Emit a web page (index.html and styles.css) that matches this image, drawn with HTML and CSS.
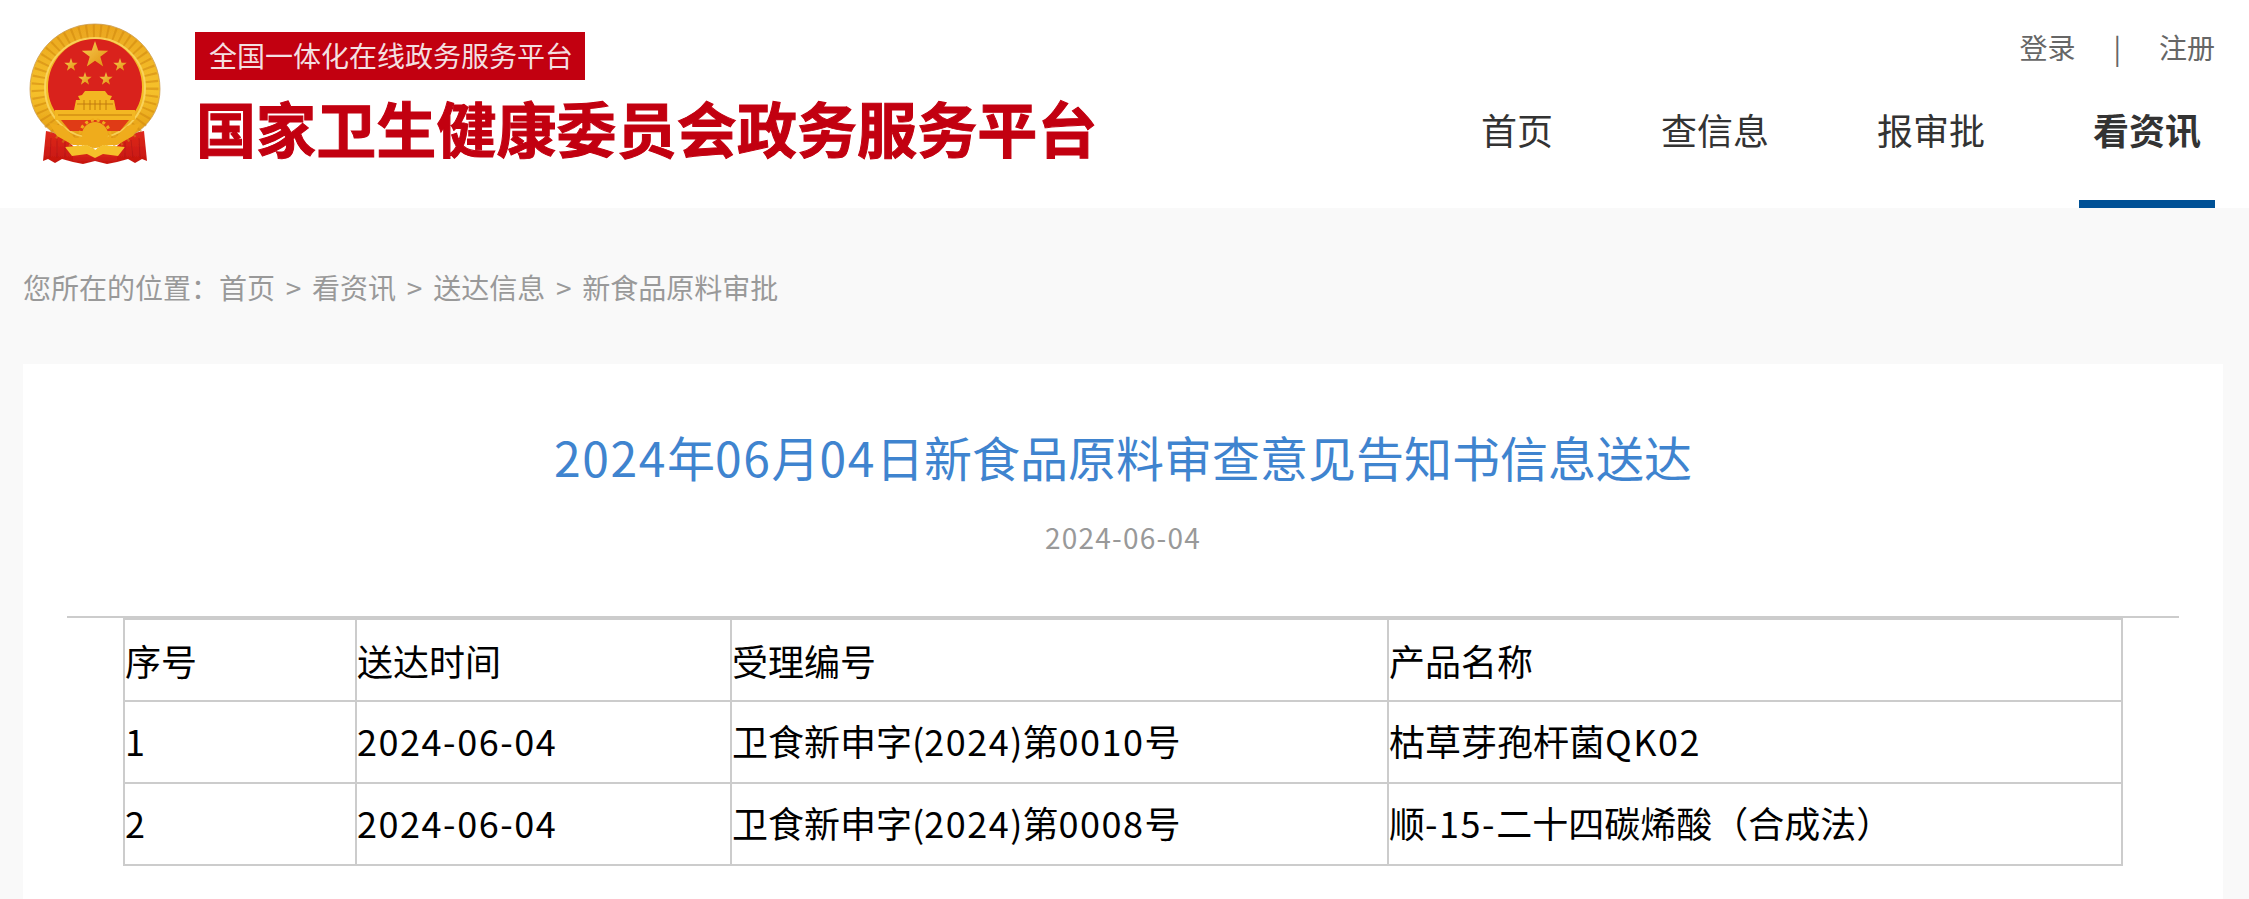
FILE: index.html
```html
<!DOCTYPE html>
<html lang="zh-CN">
<head>
<meta charset="utf-8">
<title>2024年06月04日新食品原料审查意见告知书信息送达</title>
<link rel="stylesheet" href="styles.css">
</head>
<body>
<header class="site-header">
  <div class="brand">
    <svg class="emblem" viewBox="14 13 132 141" aria-hidden="true">
      <defs>
        <linearGradient id="gold" x1="0" y1="0" x2="0" y2="1">
          <stop offset="0" stop-color="#eaa51e"/>
          <stop offset="0.55" stop-color="#f6c22c"/>
          <stop offset="1" stop-color="#e39a12"/>
        </linearGradient>
        <linearGradient id="star" x1="0" y1="0" x2="1" y2="1">
          <stop offset="0" stop-color="#f8cf52"/>
          <stop offset="1" stop-color="#e0900f"/>
        </linearGradient>
        <linearGradient id="drape" x1="0" y1="0" x2="0" y2="1">
          <stop offset="0" stop-color="#e02a1c"/>
          <stop offset="1" stop-color="#c5150f"/>
        </linearGradient>
        <filter id="soft" x="-5%" y="-5%" width="110%" height="110%"><feGaussianBlur stdDeviation="0.5"/></filter>
      </defs>
      <g filter="url(#soft)">
        <path fill="url(#drape)" d="M31 121 L46 124 L60 138 L58 152 L47 149 L40 153 L33 149 L28 151Z"/>
        <path fill="url(#drape)" d="M129 121 L114 124 L100 138 L102 152 L113 149 L120 153 L127 149 L132 151Z"/>
        <path fill="url(#drape)" d="M58 140 H102 V152 L92 154 L80 151 L68 154 L58 152Z"/>
        <path fill="url(#gold)" stroke="#c99a52" stroke-width="0.8" d="M80 14 C116 14 145 43 145 79 C145 96 138 110 124 121 L104 133 H56 L36 121 C22 110 15 96 15 79 C15 43 44 14 80 14Z"/>
        <circle cx="80" cy="78" r="57" fill="none" stroke="#cf8610" stroke-width="13" stroke-dasharray="2 5" opacity="0.55"/>
        <circle cx="80" cy="78" r="50" fill="none" stroke="#fbd968" stroke-width="2" opacity="0.8"/>
        <path fill="#d9201a" d="M80 29 C106 29 127 50 127 77 C127 90 122 101 113 110 H47 C38 101 33 90 33 77 C33 50 54 29 80 29Z"/>
        <g fill="url(#star)">
          <polygon points="80,31 83.3,40.5 93.3,40.7 85.3,46.8 88.2,56.4 80,50.7 71.8,56.4 74.7,46.8 66.7,40.7 76.7,40.5"/>
          <polygon points="56,48 57.6,52.7 62.7,52.8 58.7,55.9 60.1,60.7 56,57.8 51.9,60.7 53.3,55.9 49.3,52.8 54.4,52.7"/>
          <polygon points="105,48 106.6,52.7 111.7,52.8 107.7,55.9 109.1,60.7 105,57.8 100.9,60.7 102.3,55.9 98.3,52.8 103.4,52.7"/>
          <polygon points="70,62 71.6,66.7 76.7,66.8 72.7,69.9 74.1,74.7 70,71.8 65.9,74.7 67.3,69.9 63.3,66.8 68.4,66.7"/>
          <polygon points="91,62 92.6,66.7 97.7,66.8 93.7,69.9 95.1,74.7 91,71.8 86.9,74.7 88.3,69.9 84.3,66.8 89.4,66.7"/>
        </g>
        <g fill="#f3b722">
          <path d="M63 86 L67 85 L70 81 H90 L93 85 L97 86 L95 90 H99 L101 100 H59 L61 90 H65Z"/>
          <rect x="40" y="100" width="80" height="10"/>
        </g>
        <path fill="#e03a18" d="M46 110 H114 L105 121 H55Z"/>
        <g fill="none" stroke="#b8700c" stroke-width="0.8">
          <path d="M62 94 H98 M43 105 H117"/>
          <path d="M69 90 V100 M75 90 V100 M80 90 V100 M85 90 V100 M91 90 V100"/>
        </g>
        <circle cx="80" cy="125" r="13" fill="#efac1c"/>
        <circle cx="80" cy="125" r="15" fill="none" stroke="#efac1c" stroke-width="3" stroke-dasharray="3 3"/>
        <path fill="#efac1c" d="M34 113 L48 116 L60 128 L100 128 L112 116 L126 113 L118 126 L102 135 H58 L42 126Z"/>
        <path fill="#f5c02a" d="M50 137 L72 135 L80 140 L88 135 L110 137 L103 146 L88 144 L80 148 L72 144 L57 146Z"/>
        <g stroke="#a81612" stroke-width="0.8" fill="none" opacity="0.7">
          <path d="M36 128 L35 148 M42 129 L42 148 M50 132 L50 148 M110 132 L110 148 M116 130 L118 148 M124 128 L125 148"/>
        </g>
      </g>
    </svg>
    <div class="brand-text">
      <div class="brand-tag">全国一体化在线政务服务平台</div>
      <div class="brand-name">国家卫生健康委员会政务服务平台</div>
    </div>
  </div>
  <div class="header-right">
    <div class="user-links">
      <a class="user-link">登录</a>
      <span class="user-sep">|</span>
      <a class="user-link">注册</a>
    </div>
    <nav class="main-nav">
      <a class="nav-item">首页</a>
      <a class="nav-item">查信息</a>
      <a class="nav-item">报审批</a>
      <a class="nav-item is-active">看资讯</a>
    </nav>
  </div>
</header>

<div class="breadcrumb">您所在的位置&#xFF1A;首页 &gt; 看资讯 &gt; 送达信息 &gt; 新食品原料审批</div>

<main class="article">
  <h1 class="article-title"><span class="num">2024</span>年<span class="num">06</span>月<span class="num">04</span>日新食品原料审查意见告知书信息送达</h1>
  <div class="article-date">2024-06-04</div>
  <div class="article-body">
    <table class="data-table">
      <colgroup>
        <col class="col-a"><col class="col-b"><col class="col-c"><col class="col-d">
      </colgroup>
      <tr class="head-row"><td>序号</td><td>送达时间</td><td>受理编号</td><td>产品名称</td></tr>
      <tr><td>1</td><td class="num">2024-06-04</td><td>卫食新申字(<span class="num">2024</span>)第<span class="num">0010</span>号</td><td>枯草芽孢杆菌<span class="num">QK02</span></td></tr>
      <tr><td>2</td><td class="num">2024-06-04</td><td>卫食新申字(<span class="num">2024</span>)第<span class="num">0008</span>号</td><td>顺<span class="num">-15-</span>二十四碳烯酸&#xFF08;合成法&#xFF09;</td></tr>
    </table>
  </div>
</main>
</body>
</html>
```
FILE: styles.css
```css
* { box-sizing: border-box; }
html, body { margin: 0; padding: 0; }
body {
  height: 899px;
  overflow: hidden;
  background: #f9f9f9;
  font-family: "Noto Sans CJK SC", "Noto Sans", sans-serif;
  color: #000;
}
.num { letter-spacing: 0.043em; }
.site-header {
  height: 208px;
  background: #fff;
  display: flex;
  justify-content: space-between;
  padding: 0 34px 0 29px;
}
.brand { display: flex; align-items: flex-start; gap: 34px; }
.emblem { width: 132px; height: 141px; margin-top: 23px; flex: none; }
.brand-text { padding-top: 32px; }
.brand-tag {
  width: 390px;
  height: 48px;
  background: #c20010;
  color: #f4dfe0;
  font-size: 28px;
  line-height: 47px;
  padding-left: 14px;
  white-space: nowrap;
}
.brand-name {
  margin-top: 12px;
  margin-left: 1px;
  color: #c20010;
  font-size: 60px;
  font-weight: 700;
  letter-spacing: 0.1px;
  line-height: 70px;
  white-space: nowrap;
  -webkit-text-stroke: 1px #c20010;
}
.header-right {
  display: flex;
  flex-direction: column;
  justify-content: space-between;
  align-items: flex-end;
}
.user-links {
  display: flex;
  align-items: center;
  gap: 38px;
  height: 38px;
  margin-top: 28px;
  font-size: 28px;
  line-height: 38px;
  color: #666;
}
.main-nav { display: flex; gap: 80px; }
.nav-item {
  height: 100px;
  padding: 0 14px;
  font-size: 36px;
  line-height: 42px;
  color: #333;
  border-bottom: 8px solid transparent;
}
.nav-item.is-active {
  font-weight: 700;
  border-bottom-color: #005196;
}
.breadcrumb {
  height: 156px;
  padding: 61px 0 0 23px;
  font-size: 28px;
  line-height: 36px;
  word-spacing: 4.5px;
  color: #999;
}
.article {
  width: 2200px;
  height: 535px;
  margin-left: 23px;
  padding: 0 44px;
  background: #fff;
}
.article-title {
  margin: 0;
  padding-top: 62px;
  font-size: 48px;
  font-weight: 400;
  line-height: 60px;
  text-align: center;
  color: #3f84cf;
}
.article-title .num { letter-spacing: 0.034em; }
.article-date {
  margin-top: 31px;
  font-size: 28px;
  letter-spacing: 0.043em;
  line-height: 40px;
  text-align: center;
  color: #999;
}
.article-body {
  margin-top: 59px;
  border-top: 2px solid #ccc;
  display: flex;
  justify-content: center;
}
.data-table {
  width: 1998px;
  table-layout: fixed;
  border-collapse: collapse;
  font-size: 36px;
}
.col-a { width: 232px; }
.col-b { width: 375px; }
.col-c { width: 657px; }
.col-d { width: 734px; }
.data-table td {
  height: 82px;
  padding: 0 0 4px;
  border: 2px solid #ccc;
  white-space: nowrap;
}
.data-table .head-row td { padding-bottom: 0; }
```
